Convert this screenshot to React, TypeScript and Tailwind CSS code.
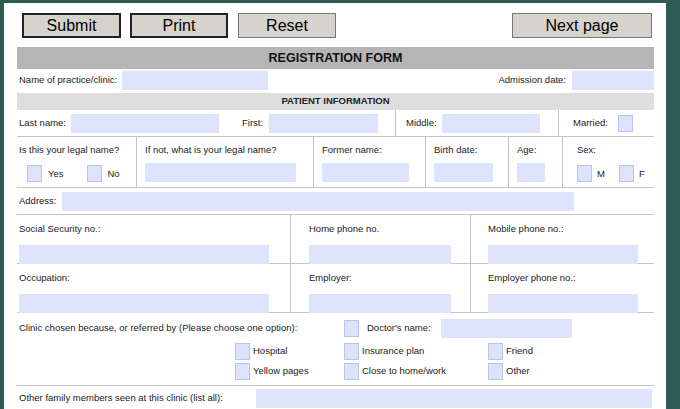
import React from "react";

const F = ({ w, h = "h-[19px]" }: { w: string; h?: string }) => (
  <div className={`${w} ${h} bg-[#dde3fb] shrink-0`} />
);
const Box = () => <div className="w-[15px] h-[17px] bg-[#dde3fb] border border-[#b9c3ee] shrink-0" />;

const Btn = ({ label, w, thick }: { label: string; w: string; thick?: boolean }) => (
  <div
    className={`${w} h-[25px] flex items-center justify-center bg-[#d6d3cc] text-[16px] text-black ${
      thick ? "border-2 border-[#222]" : "border border-[#777]"
    }`}
  >
    {label}
  </div>
);

export default function App() {
  return (
    <div className="w-[680px] h-[409px] overflow-hidden bg-[#2f5c52] pt-[3px] font-[family-name:Liberation_Sans,Arial,sans-serif] text-[9.5px] text-[#222]">
      <div className="w-[662px] ml-[4px] h-[406px] bg-white pl-[13px] pr-[12px]">
        <div className="flex pt-[10px] h-[40px]">
          <div className="ml-[5px]"><Btn label="Submit" w="w-[99px]" thick /></div>
          <div className="ml-[9px]"><Btn label="Print" w="w-[98px]" thick /></div>
          <div className="ml-[10px]"><Btn label="Reset" w="w-[98px]" /></div>
          <div className="ml-auto mr-[2px]"><Btn label="Next page" w="w-[140px]" /></div>
        </div>
        <div className="h-[22px] mt-[4px] bg-[#b5b5b5] flex items-center justify-center font-bold text-[12.5px] text-[#111]">
          REGISTRATION FORM
        </div>
        <div className="flex items-center h-[22px] pl-[2px]">
          <span>Name of practice/clinic:</span>
          <div className="ml-[5px]"><F w="w-[146px]" /></div>
          <span className="ml-auto">Admission date:</span>
          <div className="ml-[6px]"><F w="w-[82px]" /></div>
        </div>
        <div className="h-[17px] mt-[2px] bg-[#dedede] flex items-center justify-center font-bold text-[9.5px]">
          PATIENT INFORMATION
        </div>
        <div className="flex h-[27px] border-b border-[#c4c4c4]">
          <div className="flex items-center w-[378px] pl-[2px]">
            <span>Last name:</span>
            <div className="ml-[5px]"><F w="w-[148px]" /></div>
            <span className="ml-[23px]">First:</span>
            <div className="ml-[6px]"><F w="w-[109px]" /></div>
          </div>
          <div className="flex items-center w-[163px] border-l border-[#c4c4c4] pl-[10px]">
            <span>Middle:</span>
            <div className="ml-[5px]"><F w="w-[98px]" /></div>
          </div>
          <div className="flex items-center flex-1 border-l border-[#c4c4c4] pl-[14px]">
            <span>Married:</span>
            <div className="ml-[10px]"><Box /></div>
          </div>
        </div>
        <div className="flex h-[51px] border-b border-[#c4c4c4]">
          <div className="w-[119px] pl-[2px] pt-[6px]">
            <div>Is this your legal name?</div>
            <div className="flex items-center mt-[8px] ml-[8px]">
              <Box /><span className="ml-[6px]">Yes</span>
              <div className="ml-[23px]"><Box /></div><span className="ml-[6px]">No</span>
            </div>
          </div>
          <div className="w-[177px] border-l border-[#c4c4c4] pl-[8px] pt-[6px]">
            <div>If not, what is your legal name?</div>
            <div className="mt-[6px]"><F w="w-[151px]" /></div>
          </div>
          <div className="w-[112px] border-l border-[#c4c4c4] pl-[8px] pt-[6px]">
            <div>Former name:</div>
            <div className="mt-[6px]"><F w="w-[87px]" /></div>
          </div>
          <div className="w-[83px] border-l border-[#c4c4c4] pl-[8px] pt-[6px]">
            <div>Birth date:</div>
            <div className="mt-[6px]"><F w="w-[59px]" /></div>
          </div>
          <div className="w-[54px] border-l border-[#c4c4c4] pl-[8px] pt-[6px]">
            <div>Age:</div>
            <div className="mt-[6px]"><F w="w-[28px]" /></div>
          </div>
          <div className="flex-1 border-l border-[#c4c4c4] pl-[14px] pt-[6px]">
            <div>Sex:</div>
            <div className="flex items-center mt-[8px]">
              <Box /><span className="ml-[5px]">M</span>
              <div className="ml-[14px]"><Box /></div><span className="ml-[5px]">F</span>
            </div>
          </div>
        </div>
        <div className="flex items-center h-[27px] pl-[2px] border-b border-[#c4c4c4]">
          <span>Address:</span>
          <div className="ml-[5px]"><F w="w-[512px]" /></div>
        </div>
        {[
          ["Social Security no.:", "Home phone no.", "Mobile phone no.:"],
          ["Occupation:", "Employer:", "Employer phone no.:"],
        ].map((r, i) => (
          <div key={i} className="flex h-[49px] border-b border-[#c4c4c4]">
            <div className="w-[273px] pl-[2px] pt-[7px]">
              <div>{r[0]}</div>
              <div className="mt-[9px]"><F w="w-[250px]" /></div>
            </div>
            <div className="w-[180px] border-l border-[#c4c4c4] pl-[18px] pt-[7px]">
              <div>{r[1]}</div>
              <div className="mt-[9px]"><F w="w-[142px]" /></div>
            </div>
            <div className="flex-1 border-l border-[#c4c4c4] pl-[17px] pt-[7px]">
              <div>{r[2]}</div>
              <div className="mt-[9px]"><F w="w-[150px]" /></div>
            </div>
          </div>
        ))}
        <div className="h-[73px] border-b border-[#c4c4c4] pl-[2px] pt-[6px]">
          <div className="flex items-center">
            <span className="w-[325px]">Clinic chosen because, or referred by (Please choose one option):</span>
            <Box />
            <span className="ml-[8px]">Doctor's name:</span>
            <div className="ml-[10px]"><F w="w-[131px]" /></div>
          </div>
          <div className="grid grid-cols-[109px_144px_120px] ml-[216px] mt-[5px] gap-y-[3px]">
            {["Hospital", "Insurance plan", "Friend", "Yellow pages", "Close to home/work", "Other"].map((t) => (
              <div key={t} className="flex items-center">
                <Box /><span className="ml-[3px]">{t}</span>
              </div>
            ))}
          </div>
        </div>
        <div className="flex items-center h-[24px] pl-[2px]">
          <span>Other family members seen at this clinic (list all):</span>
          <div className="ml-auto mr-[2px]"><F w="w-[396px]" /></div>
        </div>
      </div>
    </div>
  );
}
